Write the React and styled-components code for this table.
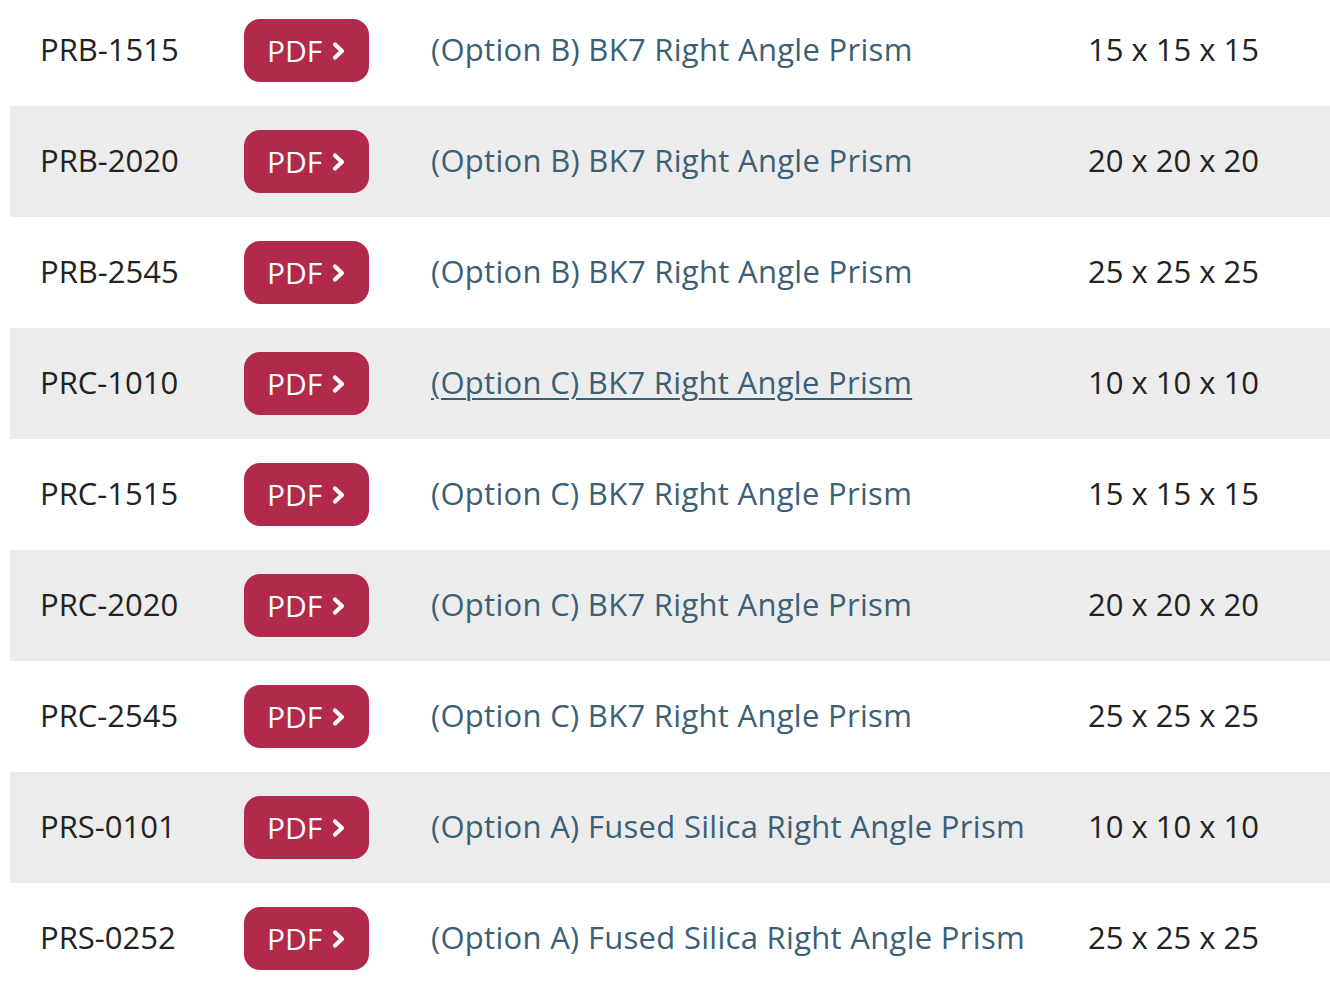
import React from "react";
import styled, { createGlobalStyle } from "styled-components";

const Global = createGlobalStyle`
  html, body { margin: 0; padding: 0; background: #fff; }
  body { font-family: "Open Sans", "Noto Sans", sans-serif; color: #222; }
`;

const Table = styled.div`
  margin-top: -5px;
  padding-left: 10px;
  overflow: hidden;
`;

const Row = styled.div`
  display: grid;
  grid-template-columns: 204px 187px 657px 1fr;
  align-items: center;
  height: 111px;
  padding-left: 30px;
  padding-bottom: 2px;
  box-sizing: border-box;
  background: ${(p) => (p.$striped ? "#ececec" : "#fff")};
  font-size: 31px;
  line-height: 1;
`;

const Code = styled.div`
  color: #222;
`;

const PdfButton = styled.a`
  display: inline-flex;
  align-items: center;
  justify-content: flex-start;
  gap: 9px;
  box-sizing: border-box;
  width: 125px;
  height: 63px;
  margin-top: 2px;
  padding-left: 23px;
  border-radius: 16px;
  background: #b12a4b;
  color: #fff;
  text-decoration: none;
  font-size: 30px;
`;

const Desc = styled.a`
  color: #3b5f77;
  letter-spacing: 0.3px;
  text-decoration: ${(p) => (p.$hover ? "underline" : "none")};
  text-underline-offset: 4px;
  text-decoration-thickness: 2px;
  white-space: nowrap;
`;

const Size = styled.div`
  color: #222;
  white-space: nowrap;
`;

const Chevron = () => (
  <svg width="15" height="20" viewBox="0 0 15 20" aria-hidden="true">
    <polyline
      points="4,3.5 11,10 4,16.5"
      fill="none"
      stroke="#fff"
      strokeWidth="4.2"
      strokeLinecap="round"
      strokeLinejoin="round"
    />
  </svg>
);

const rows = [
  ["PRB-1515", "(Option B) BK7 Right Angle Prism", "15 x 15 x 15"],
  ["PRB-2020", "(Option B) BK7 Right Angle Prism", "20 x 20 x 20"],
  ["PRB-2545", "(Option B) BK7 Right Angle Prism", "25 x 25 x 25"],
  ["PRC-1010", "(Option C) BK7 Right Angle Prism", "10 x 10 x 10"],
  ["PRC-1515", "(Option C) BK7 Right Angle Prism", "15 x 15 x 15"],
  ["PRC-2020", "(Option C) BK7 Right Angle Prism", "20 x 20 x 20"],
  ["PRC-2545", "(Option C) BK7 Right Angle Prism", "25 x 25 x 25"],
  ["PRS-0101", "(Option A) Fused Silica Right Angle Prism", "10 x 10 x 10"],
  ["PRS-0252", "(Option A) Fused Silica Right Angle Prism", "25 x 25 x 25"],
];

export default function App() {
  return (
    <>
      <Global />
      <Table>
        {rows.map(([code, desc, size], i) => (
          <Row key={code} $striped={i % 2 === 1}>
            <Code>{code}</Code>
            <div>
              <PdfButton href="#">
                PDF
                <Chevron />
              </PdfButton>
            </div>
            <div>
              <Desc href="#" $hover={i === 3}>{desc}</Desc>
            </div>
            <Size>{size}</Size>
          </Row>
        ))}
      </Table>
    </>
  );
}
